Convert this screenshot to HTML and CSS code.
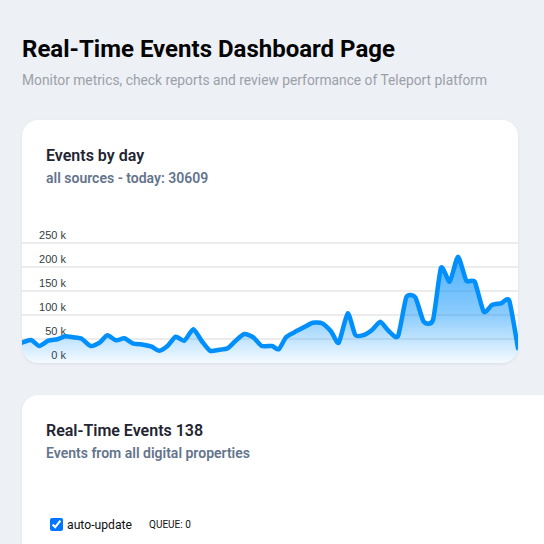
FILE: index.html
```html
<!DOCTYPE html>
<html lang="en">
<head>
<meta charset="utf-8">
<title>Real-Time Events Dashboard Page</title>
<link rel="stylesheet" href="styles.css">
</head>
<body>
<main class="page">
  <header class="page-head">
    <h1 class="page-title">Real-Time Events Dashboard Page</h1>
    <p class="page-sub">Monitor metrics, check reports and review performance of Teleport platform</p>
  </header>

  <section class="card chart-card">
    <div class="card-head">
      <h2 class="card-title">Events by day</h2>
      <p class="card-sub">all sources - today: 30609</p>
    </div>
    <svg class="chart" width="496" height="175" viewBox="0 0 496 175">
      <defs>
        <linearGradient id="areaFill" x1="0" y1="0" x2="0" y2="1">
          <stop offset="0" stop-color="#008ffb" stop-opacity="0.7"/>
          <stop offset="0.55" stop-color="#008ffb" stop-opacity="0.45"/>
          <stop offset="1" stop-color="#008ffb" stop-opacity="0.04"/>
        </linearGradient>
      </defs>
      <g class="grid">
        <line x1="0" y1="55" x2="496" y2="55"/>
        <line x1="0" y1="79" x2="496" y2="79"/>
        <line x1="0" y1="103" x2="496" y2="103"/>
        <line x1="0" y1="127" x2="496" y2="127"/>
        <line x1="0" y1="151" x2="496" y2="151"/>
      </g>
      <g class="ylabels">
        <text x="44" y="51">250 k</text>
        <text x="44" y="75">200 k</text>
        <text x="44" y="99">150 k</text>
        <text x="44" y="123">100 k</text>
        <text x="44" y="147">50 k</text>
        <text x="44" y="171">0 k</text>
      </g>
      <path id="area" class="area" d=""/>
      <path id="line" class="line" d=""/>
    </svg>
  </section>

  <section class="card events-card">
    <div class="card-head">
      <h2 class="card-title">Real-Time Events 138</h2>
      <p class="card-sub">Events from all digital properties</p>
    </div>
    <div class="controls">
      <label class="toggle"><input type="checkbox" checked> auto-update</label>
      <span class="queue">QUEUE: 0</span>
    </div>
  </section>
</main>
<script src="chart.js"></script>
</body>
</html>
```

FILE: chart.js
```js
(function () {
  var pts = [
    [0,154.7],[9,152],[17.3,158],[26.3,152.7],[35.3,151.3],[43,148.3],[51.3,149.3],[59.7,150.7],
    [68.7,158],[78,154.3],[85.3,147.3],[94,152.3],[102.3,150.3],[110.7,155.3],[121.3,156.7],
    [129.7,158.7],[137.3,162.7],[145.7,157.7],[153.7,148.7],[162.3,152.7],[171.3,141.3],
    [179.7,153],[188,162.7],[196.3,162],[205.7,160.3],[213.7,152.7],[222.3,146],[231.3,149.3],
    [239.7,158],[250,158],[256.7,161.3],[264,149.3],[271.7,144.7],[280,140.3],[290.7,134.7],
    [300,135.3],[309.3,143.7],[316.7,154.7],[325.7,125.3],[333.3,147],[341.7,147],[350,142],
    [358.3,133.7],[366.7,143],[376,148.3],[384.3,109.3],[393.3,109.3],[401.7,133.7],[411,132],
    [419,79.7],[427.7,93.7],[436,68.7],[444.3,92.7],[452.7,93.7],[461.7,123.7],[470,117],
    [479.3,115.3],[487.3,112.7],[496,160.3]
  ];
  var t = 0.6 / 6;
  var d = "M" + pts[0][0] + "," + pts[0][1];
  for (var i = 0; i < pts.length - 1; i++) {
    var p0 = pts[i - 1] || pts[i];
    var p1 = pts[i];
    var p2 = pts[i + 1];
    var p3 = pts[i + 2] || p2;
    var c1x = p1[0] + (p2[0] - p0[0]) * t;
    var c1y = p1[1] + (p2[1] - p0[1]) * t;
    var c2x = p2[0] - (p3[0] - p1[0]) * t;
    var c2y = p2[1] - (p3[1] - p1[1]) * t;
    d += " C" + c1x.toFixed(2) + "," + c1y.toFixed(2) + " " +
         c2x.toFixed(2) + "," + c2y.toFixed(2) + " " + p2[0] + "," + p2[1];
  }
  document.getElementById("line").setAttribute("d", d);
  document.getElementById("area").setAttribute("d", d + " L496,175 L0,175 Z");
})();
```

FILE: styles.css
```css
html, body {
  margin: 0;
  padding: 0;
  overflow: hidden;
}
body {
  background: #edf0f5;
  font-family: Roboto, "Liberation Sans", Arial, sans-serif;
  color: #111;
}
.page {
  padding: 33px 0 0 22px;
  display: flex;
  flex-direction: column;
  align-items: flex-start;
}
.page-head {
  display: flex;
  flex-direction: column;
  gap: 5px;
}
.page-title {
  margin: 0;
  font-size: 24px;
  line-height: 32px;
  font-weight: 700;
  color: #050505;
}
.page-sub {
  margin: 0;
  font-size: 13.8px;
  line-height: 20px;
  color: #9ca0a8;
}
.card {
  background: #fff;
  border-radius: 16px;
  box-shadow: 0 1px 3px rgba(15, 23, 42, 0.08);
  box-sizing: border-box;
  overflow: hidden;
}
.chart-card {
  margin-top: 30px;
  width: 496px;
  display: flex;
  flex-direction: column;
}
.card-head {
  padding: 24px 24px 0;
}
.card-title {
  margin: 0;
  font-size: 16px;
  line-height: 24px;
  font-weight: 600;
  color: #1f2532;
}
.card-sub {
  margin: 0;
  font-size: 14px;
  line-height: 20px;
  font-weight: 600;
  color: #64748b;
}
.chart {
  display: block;
}
.grid line {
  stroke: #e6e6e6;
  stroke-width: 1.5;
}
.ylabels text {
  font-family: "Liberation Sans", Arial, sans-serif;
  font-size: 11px;
  fill: #373d3f;
  text-anchor: end;
}
.area {
  fill: url(#areaFill);
}
.line {
  fill: none;
  stroke: #008ffb;
  stroke-width: 4.5;
  stroke-linejoin: round;
  stroke-linecap: round;
}
.events-card {
  margin-top: 32px;
  width: 600px;
  height: 200px;
}
.controls {
  display: flex;
  align-items: center;
  gap: 17px;
  padding: 0 24px;
  margin-top: 52px;
}
.toggle {
  display: flex;
  align-items: center;
  font-size: 12.2px;
  color: #111;
}
.toggle input {
  margin: 3px 4px 3px 4px;
}
.queue {
  font-size: 10px;
  font-weight: 400;
  color: #111;
}
```
